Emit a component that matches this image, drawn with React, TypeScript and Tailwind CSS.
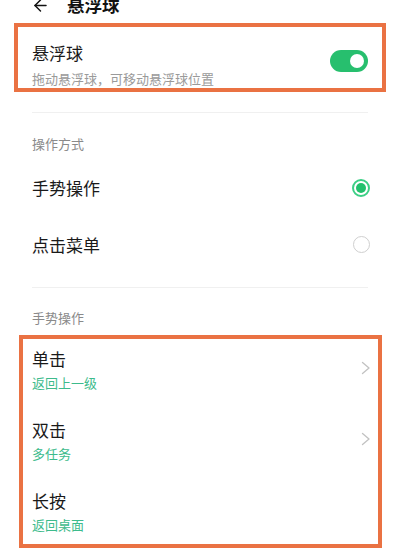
import { ArrowLeft } from 'lucide-react';

const gestures = [
  { title: '单击', action: '返回上一级', more: true },
  { title: '双击', action: '多任务', more: true },
  { title: '长按', action: '返回桌面', more: false },
];

function Toggle({ on }: { on: boolean }) {
  return (
    <div
      className={`w-[38px] h-[22px] rounded-full flex items-center px-[4px] ${
        on ? 'bg-[#27bf6e] justify-end' : 'bg-[#d9d9d9] justify-start'
      }`}
    >
      <div className="w-[14px] h-[14px] rounded-full bg-white" />
    </div>
  );
}

function Radio({ checked }: { checked: boolean }) {
  if (checked) {
    return (
      <div className="w-[18px] h-[18px] rounded-full border-[2px] border-[#3ccf85] flex items-center justify-center">
        <div className="w-[10px] h-[10px] rounded-full bg-[#22c06c]" />
      </div>
    );
  }
  return <div className="w-[17px] h-[17px] rounded-full border-[1.5px] border-[#cfcfcf]" />;
}

// thin list arrow
function Chevron() {
  return (
    <svg width="10" height="14" viewBox="0 0 10 14" fill="none" className="-mt-[3px]">
      <path d="M1.5 1.5 L8 7 L1.5 12.5" stroke="#c2c2c2" strokeWidth="1.3" strokeLinecap="round" strokeLinejoin="round" />
    </svg>
  );
}

export default function App() {
  return (
    <div
      className="w-[400px] h-[555px] bg-white overflow-hidden"
      style={{ fontFamily: '"Noto Sans CJK SC", "Noto Sans", sans-serif' }}
    >
      {/* Header */}
      <div className="-mt-[5px] h-[20px] flex items-center pl-[31px] gap-[17px] text-[#111]">
        <ArrowLeft size={19} strokeWidth={1.8} />
        <span className="text-[17.5px] leading-[18px] font-bold">悬浮球</span>
      </div>

      {/* Floating ball switch */}
      <div className="mt-[8px] mx-[14px] h-[69px] border-[4px] border-[#ea7243] flex items-start justify-between pl-[14px] pr-[14px] pt-[17px]">
        <div>
          <div className="text-[17px] leading-[17px] text-[#1a1a1a]">悬浮球</div>
          <div className="mt-[11px] text-[13px] leading-[13px] text-[#9a9a9a]">
            拖动悬浮球，可移动悬浮球位置
          </div>
        </div>
        <div className="mt-[6px]">
          <Toggle on />
        </div>
      </div>

      <div className="mt-[20px] mx-[32px] h-px bg-[#f0f0f0]" />

      {/* Operation mode */}
      <div className="pt-[24px] pl-[32px] text-[13px] leading-[13px] text-[#8a8a8a]">操作方式</div>
      <div className="mt-[9px]">
        {[
          { label: '手势操作', checked: true },
          { label: '点击菜单', checked: false },
        ].map((item) => (
          <div key={item.label} className="h-[57px] flex items-center justify-between pl-[32px] pr-[30px]">
            <span className="text-[17px] leading-[17px] text-[#1a1a1a]">{item.label}</span>
            <Radio checked={item.checked} />
          </div>
        ))}
      </div>

      <div className="mt-[14px] mx-[32px] h-px bg-[#f0f0f0]" />

      {/* Gesture actions */}
      <div className="pt-[23px] pl-[32px] text-[13px] leading-[13px] text-[#8a8a8a]">手势操作</div>
      <div className="mt-[11px] ml-[19px] w-[363px] h-[213px] border-[4px] border-[#ea7243] overflow-hidden">
        {gestures.map((g) => (
          <div key={g.title} className="h-[71px] pt-[11px] pl-[9px] pr-[7px]">
            <div className="flex items-center justify-between">
              <div>
                <div className="text-[17px] leading-[17px] text-[#1a1a1a]">{g.title}</div>
                <div className="mt-[9px] text-[13px] leading-[13px] text-[#3dbb8c]">{g.action}</div>
              </div>
              {g.more && <Chevron />}
            </div>
          </div>
        ))}
      </div>
    </div>
  );
}
